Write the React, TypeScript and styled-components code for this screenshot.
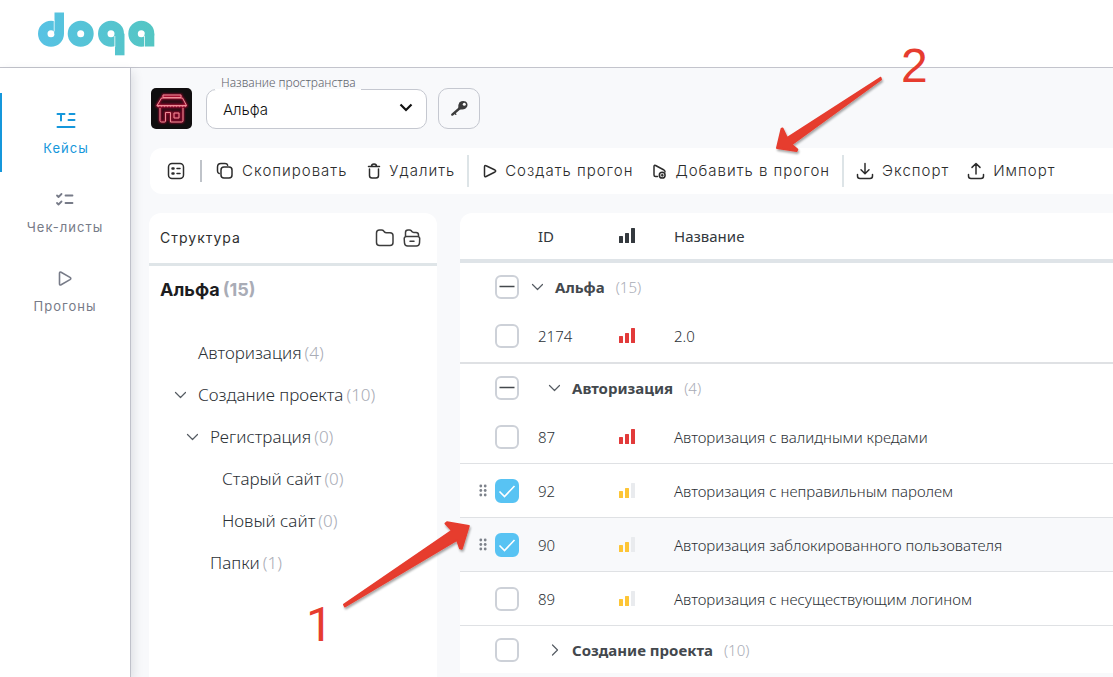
import React, { useEffect, useRef } from "react";
import styled, { createGlobalStyle, css } from "styled-components";

const GlobalStyle = createGlobalStyle`
  *, *::before, *::after { box-sizing: border-box; }
  body {
    margin: 0;
    background: #f8f9fb;
    color: #3b4045;
    font-family: "Noto Sans", "Open Sans", sans-serif;
    font-size: 15px;
  }
  button, select, input { font: inherit; color: inherit; margin: 0; }
`;

const Page = styled.div`
  position: relative;
  display: flex;
  flex-direction: column;
  min-height: 100vh;
  overflow: hidden;
`;

const Header = styled.header`
  display: flex;
  align-items: flex-start;
  height: 68px;
  padding: 12px 38px 0;
  background: #fff;
  border-bottom: 1px solid #c3c4cc;
`;

const Body = styled.div`
  display: flex;
  flex: 1;
`;

const Sidebar = styled.nav`
  flex: none;
  width: 131px;
  padding-top: 25px;
  background: #fff;
  border-right: 1px solid #bfc1ca;
  box-shadow: 2px 4px 10px rgba(40, 50, 70, 0.14);
`;

const NavItem = styled.a<{ $active?: boolean }>`
  display: flex;
  flex-direction: column;
  align-items: center;
  gap: 8px;
  height: 79px;
  padding-top: 17px;
  border-left: ${(p) => (p.$active ? "2px solid #1597db" : "0")};
  color: ${(p) => (p.$active ? "#1597db" : "#777b88")};
  font-family: Inter, sans-serif;
  font-size: 13px;
  font-weight: 400;
  line-height: 20px;
  letter-spacing: 1px;
  text-decoration: none;
`;

const Main = styled.main`
  display: flex;
  flex: 1;
  flex-direction: column;
  min-width: 0;
  padding: 20px 0 0 18px;
`;

const SpaceBar = styled.div`
  display: flex;
  align-items: center;
  height: 41px;
  padding-left: 2px;
`;

const SelectField = styled.div`
  position: relative;
  width: 221px;
  margin: 0 11px 0 14px;
`;

const FieldLabel = styled.label`
  position: absolute;
  top: -13px;
  left: 9px;
  padding: 0 5px 0 6px;
  border-bottom: 1px solid #fff;
  color: #5f636c;
  font-size: 12px;
  font-weight: 300;
  line-height: 13px;
  white-space: nowrap;
`;

const Select = styled.select`
  display: block;
  width: 100%;
  height: 40px;
  padding: 2px 40px 0 16px;
  appearance: none;
  border: 1px solid #c5c8d0;
  border-radius: 10px;
  background: #fff;
  color: #111;
  font-family: Inter, sans-serif;
  font-size: 15px;
  font-weight: 300;
`;

const SelectArrow = styled.svg`
  position: absolute;
  top: 14px;
  right: 14px;
  pointer-events: none;
`;

const KeyButton = styled.button`
  display: flex;
  align-items: center;
  justify-content: center;
  width: 42px;
  height: 41px;
  padding: 0;
  border: 1px solid #c5c8d0;
  border-radius: 10px;
  background: transparent;
`;

const Toolbar = styled.div`
  display: flex;
  align-items: center;
  height: 46px;
  margin: 19px 0 19px 1px;
  padding-left: 17px;
  border-radius: 12px 0 0 12px;
  background: #fff;
  overflow: hidden;
`;

const ToolButton = styled.button`
  display: flex;
  flex: none;
  align-items: center;
  gap: 8px;
  padding: 0;
  border: 0;
  background: none;
  color: #2c2c2c;
  font-family: Inter, sans-serif;
  font-size: 15px;
  font-weight: 300;
  letter-spacing: 1px;
  line-height: 20px;
  white-space: nowrap;
`;

const Group = styled.div<{ $gap: number }>`
  display: flex;
  flex: none;
  gap: ${(p) => p.$gap}px;
`;

const Divider = styled.span<{ $short?: boolean; $after: number }>`
  flex: none;
  width: 2px;
  height: ${(p) => (p.$short ? 22 : 32)}px;
  margin: 0 ${(p) => p.$after}px 0 ${(p) => (p.$short ? 15 : 12)}px;
  background: ${(p) => (p.$short ? "#bfc3c9" : "#dde4e7")};
`;

const Panels = styled.div`
  display: flex;
  flex: 1;
  align-items: stretch;
  gap: 23px;
`;

const Structure = styled.section`
  flex: none;
  width: 288px;
  border-radius: 12px 12px 0 0;
  background: #fff;
`;

const StructureHead = styled.div`
  display: flex;
  align-items: center;
  gap: 8px;
  height: 53px;
  padding: 0 16px 0 11px;
  border-bottom: 3px solid #dfe5e8;
`;

const StructureTitle = styled.h2`
  flex: 1;
  margin: 0;
  color: #2e2e2e;
  font-family: Inter, sans-serif;
  font-size: 14px;
  font-weight: 400;
  line-height: 20px;
  letter-spacing: 1px;
`;

const IconButton = styled.button`
  display: flex;
  padding: 0;
  border: 0;
  background: none;
  color: #3c3c3c;
`;

const Root = styled.div`
  padding: 12px 11px 30px;
  color: #1d1d1f;
  font-family: Inter, sans-serif;
  font-size: 18px;
  font-weight: 700;
  line-height: 24px;
`;

const Tree = styled.ul`
  margin: 0;
  padding: 0;
  list-style: none;
`;

const Node = styled.li<{ $level: number }>`
  display: flex;
  align-items: center;
  height: 42px;
  padding-left: ${(p) => 25 + p.$level * 12}px;
  color: #2c3136;
  font-size: 17px;
  font-weight: 300;
  line-height: 24px;
`;

const Toggle = styled.button`
  display: flex;
  width: 24px;
  padding: 0;
  border: 0;
  background: none;
  color: #555b62;
`;

const Muted = styled.span`
  margin-left: 3px;
  color: #a9acb6;
`;

const TableArea = styled.div`
  flex: 1;
  min-width: 0;
`;

const Table = styled.table`
  width: 100%;
  table-layout: fixed;
  border-collapse: separate;
  border-spacing: 0;
  border-radius: 12px 0 0 0;
  background: #fff;

  th, td { padding: 0; text-align: left; vertical-align: middle; white-space: nowrap; }
`;

const HeadCell = styled.th`
  height: 50px;
  border-bottom: 4px solid #dfe4e8;
  color: #33383d;
  font-weight: 400;
`;

const GroupRow = styled.tr`
  height: 47px;
`;

const CaseRow = styled.tr<{ $height: number; $hover?: boolean; $last?: boolean }>`
  height: ${(p) => p.$height}px;
  background: ${(p) => (p.$hover ? "#f8f9fb" : "transparent")};
  td { border-bottom: ${(p) => (p.$last ? 2 : 1)}px solid #dfe1e4; }
  color: #2c3136;
  font-weight: 300;
`;

const CheckWrap = styled.div`
  display: flex;
  align-items: center;
  justify-content: flex-end;
  gap: 8px;
  padding-right: 19px;
`;

const tick =
  "<svg xmlns='http://www.w3.org/2000/svg' viewBox='0 0 24 24'><path d='M4.500 12.500l5 5L19.500 7' fill='none' stroke='white' stroke-width='1.600'/></svg>";
const dash =
  "<svg xmlns='http://www.w3.org/2000/svg' viewBox='0 0 24 24'><path d='M4.500 11.500h15' fill='none' stroke='#43484d' stroke-width='1.300'/></svg>";
const svgUrl = (s: string) => `url("data:image/svg+xml,${encodeURIComponent(s)}")`;

const CheckInput = styled.input`
  flex: none;
  width: 24px;
  height: 24px;
  appearance: none;
  border: 2px solid #cdd1d8;
  border-radius: 6px;
  background: #fff center / 24px 24px no-repeat;
  &:checked { border-color: #58c3f3; background-color: #58c3f3; background-image: ${svgUrl(tick)}; }
  &:indeterminate { background-image: ${svgUrl(dash)}; }
`;

const GroupLabel = styled.div<{ $level: number }>`
  display: flex;
  align-items: center;
  ${(p) => css`margin-left: ${p.$level * 17 - 7}px;`}
  color: #43484d;
  font-weight: 700;
`;

const Count = styled.span`
  margin-left: 11px;
  color: #a9acb6;
  font-weight: 300;
`;

const Annotations = styled.svg`
  position: absolute;
  top: 0;
  left: 0;
  pointer-events: none;
`;

type IconProps = { w?: number; h?: number; x?: number; sw?: number; children: React.ReactNode };
const Icon = ({ w = 18, h = 18, x = 0, sw = 1.5, children }: IconProps) => (
  <svg width={w} height={h} viewBox={`${x} 0 ${w} ${h}`} fill="none" stroke="currentColor" strokeWidth={sw} strokeLinecap="round" strokeLinejoin="round" aria-hidden="true">
    {children}
  </svg>
);

const Logo = () => (
  <svg width="117" height="44" viewBox="0 0 117 44" role="img" aria-label="doqa">
    <defs>
      <linearGradient id="brand" gradientUnits="userSpaceOnUse" x1="0" y1="0" x2="117" y2="0">
        <stop offset="0" stopColor="#57c2e4" />
        <stop offset="1" stopColor="#54c6c3" />
      </linearGradient>
    </defs>
    <g fill="none" stroke="url(#brand)" strokeWidth="9.500">
      <circle cx="13" cy="21.700" r="8.250" />
      <circle cx="42.700" cy="21.700" r="8.250" />
      <circle cx="73" cy="21.700" r="8.250" />
      <circle cx="103.300" cy="21.700" r="8.250" />
    </g>
    <g fill="url(#brand)">
      <rect x="16.500" y="0.500" width="9.500" height="21.500" />
      <rect x="77" y="21.700" width="9.500" height="21.600" />
      <rect x="106.800" y="21.700" width="9.500" height="12.800" />
    </g>
    <g fill="#fff" opacity="0.75">
      <rect x="15.700" y="8.500" width="1" height="11" />
      <rect x="76.300" y="24" width="1" height="11" />
      <rect x="106" y="24" width="1" height="11" />
    </g>
  </svg>
);

const ShopPicture = () => (
  <svg width="41" height="41" viewBox="0 0 41 41" role="img" aria-label="Альфа">
    <defs>
      <filter id="glow" x="-20%" y="-20%" width="140%" height="140%">
        <feGaussianBlur stdDeviation="1.300" />
      </filter>
      <g id="shop" fill="none">
        <path d="M12 7h18v2.500H12zM10.500 10h21l4 7.500H6z" />
        <path d="M6 17.500c.5 1.500 2 1.500 3 0 1 1.500 2 1.500 3 0 1 1.500 2 1.500 3 0 1 1.500 2 1.500 3 0 1 1.500 2 1.500 3 0 1 1.500 2 1.500 3 0 1 1.500 2 1.500 3 0 1 1.500 2 1.500 3 0 1 1.500 2 1.500 3 0 1 1.500 2 1.500 2.500 0" />
        <path d="M9 20v12.500q0 1.500 1.500 1.500h3q1 0 1-1v-8.500h5V34h11q1.500 0 1.500-1.500V20M23 25h5v5h-5z" />
      </g>
    </defs>
    <rect width="41" height="41" rx="5" fill="#100e0f" />
    <path d="M10 10h21l4 8-3 1v14H10V19l-4-1z" fill="#54091a" opacity="0.45" />
    <use href="#shop" stroke="#c01038" strokeWidth="2" filter="url(#glow)" />
    <use href="#shop" stroke="#ee8c98" strokeWidth="1" />
  </svg>
);

const Chevron = ({ right }: { right?: boolean }) => (
  <Icon w={12} h={12} sw={1.2}>
    <path d={right ? "M4.500 1l5 5-5 5" : "M1.500 3.500l5 5 5-5"} />
  </Icon>
);

const BarsSvg = styled.svg`
  display: block;
`;

const Bars = ({ tone }: { tone: "dark" | "red" | "yellow" }) => {
  const c = { dark: "#34393e", red: "#e23a3a", yellow: "#fdc536" }[tone];
  return (
    <BarsSvg width="16" height="16" viewBox="0 0 16 16" fill={c} role="img" aria-label="Приоритет">
      <rect x="0" y="8" width="4" height="7" rx="0.500" />
      <rect x="6" y="5" width="4" height="10" rx="0.500" />
      <rect x="12" y="0" width="4" height="15" rx="0.500" fill={tone === "yellow" ? "#e9ebee" : c} />
    </BarsSvg>
  );
};

const Check = ({ label, state, drag }: { label: string; state?: "on" | "mixed"; drag?: boolean }) => {
  const ref = useRef<HTMLInputElement>(null);
  useEffect(() => {
    if (ref.current) ref.current.indeterminate = state === "mixed";
  }, [state]);
  return (
    <CheckWrap>
      {drag && (
        <svg width="8" height="14" viewBox="0 0 8 14" fill="#7d828b" aria-hidden="true">
          {[2, 6.5, 11].map((y) => (
            <React.Fragment key={y}>
              <circle cx="1.800" cy={y} r="1.400" />
              <circle cx="6.200" cy={y} r="1.400" />
            </React.Fragment>
          ))}
        </svg>
      )}
      <CheckInput ref={ref} type="checkbox" aria-label={label} defaultChecked={state === "on"} />
    </CheckWrap>
  );
};

type GroupProps = { name: string; count: number; level: number; state?: "mixed"; closed?: boolean };
const CaseGroup = ({ name, count, level, state, closed }: GroupProps) => (
  <GroupRow>
    <td><Check label={name} state={state} /></td>
    <td colSpan={3}>
      <GroupLabel $level={level}>
        <Toggle type="button" aria-label={name}><Chevron right={closed} /></Toggle>
        {name}
        <Count>({count})</Count>
      </GroupLabel>
    </td>
  </GroupRow>
);

type CaseProps = { id: number; name: string; tone: "red" | "yellow"; height: number; on?: boolean; hover?: boolean; last?: boolean };
const Case = ({ id, name, tone, height, on, hover, last }: CaseProps) => (
  <CaseRow $height={height} $hover={hover} $last={last}>
    <td><Check label={name} state={on ? "on" : undefined} drag={on} /></td>
    <td>{id}</td>
    <td><Bars tone={tone} /></td>
    <td>{name}</td>
  </CaseRow>
);

const tree = [
  { name: "Авторизация", count: 4, level: 0 },
  { name: "Создание проекта", count: 10, level: 0, open: true },
  { name: "Регистрация", count: 0, level: 1, open: true },
  { name: "Старый сайт", count: 0, level: 2 },
  { name: "Новый сайт", count: 0, level: 2 },
  { name: "Папки", count: 1, level: 1 },
];

export default function App() {
  return (
    <Page>
      <GlobalStyle />
      <Header><Logo /></Header>
      <Body>
        <Sidebar>
          <NavItem href="#cases" $active>
            <Icon w={20} h={20} sw={2}>
              <path d="M1.500 4h7M5 4v6.500M13.500 4h5M12.500 10h6M1.500 17h17" />
            </Icon>
            Кейсы
          </NavItem>
          <NavItem href="#checklists">
            <Icon w={20} h={20} sw={1.8}>
              <path d="M2 6.500l1.500 1.500 3-3M2 14l1.500 1.500 3-3M10.500 6.500h7M10.500 14h7" />
            </Icon>
            Чек-листы
          </NavItem>
          <NavItem href="#runs">
            <Icon w={20} h={20} sw={1.6}>
              <path d="M4.500 5.300q0-1.800 1.600-1L15 9.400q1.600 1.100 0 2.200L6.100 16.700q-1.600.8-1.600-1z" />
            </Icon>
            Прогоны
          </NavItem>
        </Sidebar>
        <Main>
          <SpaceBar>
            <ShopPicture />
            <SelectField>
              <Select id="space"><option>Альфа</option></Select>
              <FieldLabel htmlFor="space">Название пространства</FieldLabel>
              <SelectArrow width="14" height="10" viewBox="0 0 14 10" fill="none" stroke="#111" strokeWidth="2.200">
                <path d="M1.500 1.500L7 7l5.500-5.500" />
              </SelectArrow>
            </SelectField>
            <KeyButton type="button" aria-label="Ключ">
              <svg width="20" height="20" viewBox="0 0 20 20" aria-hidden="true">
                <path d="M11 9L3.300 15.600" stroke="#3c3c3c" strokeWidth="2.400" strokeLinecap="round" />
                <path d="M5.500 14l1.300 1.200" stroke="#3c3c3c" strokeWidth="1.400" strokeLinecap="round" />
                <path d="M10.500 3.300q3-2.200 6.200-.8 2.600 2 1.500 5-1.500 3-5 3h-2L9.300 9q-.3-3.500 1.200-5.700z" fill="#3c3c3c" />
                <circle cx="15.300" cy="5.200" r="1.500" fill="#fff" />
              </svg>
            </KeyButton>
          </SpaceBar>
          <Toolbar role="toolbar">
            <ToolButton type="button" aria-label="Вид">
              <Icon>
                <rect x="1.500" y="1.500" width="15" height="15" rx="3.500" />
                <path d="M5.500 6.500h1M5.500 11.500h1" strokeWidth="2.500" />
                <path d="M10 6.500h3M10 11.500h3" />
              </Icon>
            </ToolButton>
            <Divider $short $after={14} />
            <Group $gap={20}>
              <ToolButton type="button">
                <Icon>
                  <rect x="5" y="5" width="11" height="11" rx="3" />
                  <path d="M3.200 11.500Q1.500 11 1.500 9V5q0-3.500 3.500-3.500h4q2.200 0 2.700 1.700" />
                </Icon>
                Скопировать
              </ToolButton>
              <ToolButton type="button">
                <Icon w={14} x={2}>
                  <path d="M3.500 4.500h11M6.500 4.500q0-2.500 2.500-2.500t2.500 2.500M4.500 7v6.500q0 2.500 2.500 2.500h4q2.500 0 2.500-2.500V7" />
                </Icon>
                Удалить
              </ToolButton>
            </Group>
            <Divider $after={14} />
            <Group $gap={20}>
              <ToolButton type="button">
                <Icon w={14} x={2}>
                  <path d="M3.500 5q0-2 1.600-1.200l8.900 4.200q1.400 1 0 2L5.100 14.500Q3.500 15.300 3.500 13.500z" />
                </Icon>
                Создать прогон
              </ToolButton>
              <ToolButton type="button">
                <Icon w={14} x={2}>
                  <path d="M6.500 14.500H4.500Q3 14.500 3 13V4.500q0-1.800 1.600-1l8.400 4.500q1.200.8 1 2" />
                  <circle cx="11.200" cy="13.200" r="2.900" />
                  <path d="M11.200 12.200v2M10.200 13.200h2" strokeWidth="1.200" />
                </Icon>
                Добавить в прогон
              </ToolButton>
            </Group>
            <Divider $after={12} />
            <Group $gap={18}>
              <ToolButton type="button">
                <Icon>
                  <path d="M9 1.500v10M5 7.800l4 3.900 4-3.900M1.500 12.500v1.500q0 2.500 2.500 2.500h10q2.500 0 2.500-2.500v-1.500" />
                </Icon>
                Экспорт
              </ToolButton>
              <ToolButton type="button">
                <Icon>
                  <path d="M9 12V1.500M5 5.400l4-3.900 4 3.900M1.500 12.500v1.500q0 2.500 2.500 2.500h10q2.500 0 2.500-2.500v-1.500" />
                </Icon>
                Импорт
              </ToolButton>
            </Group>
          </Toolbar>
          <Panels>
            <Structure>
              <StructureHead>
                <StructureTitle>Структура</StructureTitle>
                <IconButton type="button" aria-label="Развернуть папки">
                  <Icon w={20} h={20}>
                    <path d="M1.500 14.500V5q0-3 3-3h2q1.500 0 2.200 1l.8 1q.5.800 2 .8h3.500q3 0 3 3v6.700q0 3-3 3H4.500q-3 0-3-3z" />
                  </Icon>
                </IconButton>
                <IconButton type="button" aria-label="Свернуть папки">
                  <Icon w={18} h={20}>
                    <path d="M2.500 8V4.500Q2.500 2 5 2h1.500q1.200 0 1.800.8L9 3.700q.5.800 1.800.8H13q2.500 0 2.500 2.500v1" />
                    <path d="M3.500 8.500h11q2 0 2.200 2L16.500 15q-.2 3-3.200 3H4.700q-3 0-3.200-3L1.200 10.500q.3-2 2.300-2zM7 13.200h4" />
                  </Icon>
                </IconButton>
              </StructureHead>
              <Root>Альфа<Muted>(15)</Muted></Root>
              <Tree>
                {tree.map((n) => (
                  <Node key={n.name} $level={n.level}>
                    <Toggle type="button" aria-label={n.name}>{n.open && <Chevron />}</Toggle>
                    {n.name}
                    <Muted>({n.count})</Muted>
                  </Node>
                ))}
              </Tree>
            </Structure>
            <TableArea>
              <Table>
                <colgroup>
                  <col style={{ width: 78 }} />
                  <col style={{ width: 81 }} />
                  <col style={{ width: 55 }} />
                  <col />
                </colgroup>
                <thead>
                  <tr>
                    <HeadCell />
                    <HeadCell>ID</HeadCell>
                    <HeadCell><Bars tone="dark" /></HeadCell>
                    <HeadCell>Название</HeadCell>
                  </tr>
                </thead>
                <tbody>
                  <CaseGroup name="Альфа" count={15} level={0} state="mixed" />
                  <Case id={2174} name="2.0" tone="red" height={54} last />
                  <CaseGroup name="Авторизация" count={4} level={1} state="mixed" />
                  <Case id={87} name="Авторизация с валидными кредами" tone="red" height={53} />
                  <Case id={92} name="Авторизация с неправильным паролем" tone="yellow" height={54} on />
                  <Case id={90} name="Авторизация заблокированного пользователя" tone="yellow" height={54} on hover />
                  <Case id={89} name="Авторизация с несуществующим логином" tone="yellow" height={54} />
                  <CaseGroup name="Создание проекта" count={10} level={1} closed />
                </tbody>
              </Table>
            </TableArea>
          </Panels>
        </Main>
      </Body>
      <Annotations width="940" height="660" viewBox="0 0 940 660" aria-hidden="true">
        <defs>
          <filter id="drop" x="-10%" y="-10%" width="120%" height="130%">
            <feDropShadow dx="1" dy="2" stdDeviation="1" floodOpacity="0.35" />
          </filter>
        </defs>
        <g fill="#e63c2f" stroke="#e63c2f" strokeWidth="2" strokeLinejoin="round" filter="url(#drop)">
          <path d="M344 604.500L452 530.500 445.500 523.500 447 522.300 468.800 526 461.800 548.800 460 548.300 457 540 345 606.500z" />
          <path d="M880.500 77.800L787 138 782.500 128.500 781.500 129 777 148 796.500 151 797.300 149.500 791.500 144.500 881 79.500z" />
        </g>
        <g fill="#e63c2f" fontSize="48">
          <text x="306" y="641" fontFamily="Roboto, sans-serif">1</text>
          <text x="901" y="82" fontFamily="Liberation Sans, Arial, sans-serif">2</text>
        </g>
      </Annotations>
    </Page>
  );
}
